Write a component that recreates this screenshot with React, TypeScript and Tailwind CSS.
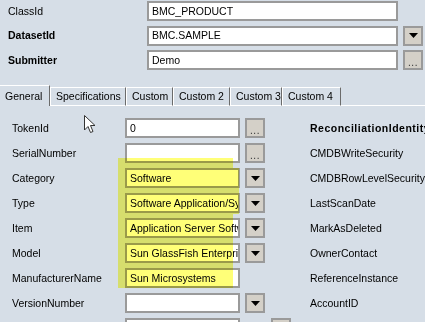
import React from "react";

const Arrow = () => (
  <svg width="9" height="5" viewBox="0 0 9 5">
    <path d="M0 0 H9 L4.5 5 Z" fill="#000" />
  </svg>
);

const Btn = ({ kind }: { kind: "dots" | "drop" }) => (
  <div className="w-[20px] h-[20px] shrink-0 bg-[#d4d0c8] border-2 border-[#9a9a9a] flex items-center justify-center">
    {kind === "drop" ? (
      <Arrow />
    ) : (
      <span className="text-[10px] leading-none text-[#333] mt-[5px] tracking-[0.5px]">...</span>
    )}
  </div>
);

const Input = ({ value, w }: { value: string; w: string }) => (
  <div
    className={`${w} h-[20px] shrink-0 bg-white border-2 border-[#9a9a9a] pl-[3px] flex items-center overflow-hidden whitespace-nowrap`}
  >
    {value}
  </div>
);

type Row = {
  label: string;
  value: string;
  btn?: "dots" | "drop";
  right: string;
  rightBold?: boolean;
};

const rows: Row[] = [
  { label: "TokenId", value: "0", btn: "dots", right: "ReconciliationIdentity", rightBold: true },
  { label: "SerialNumber", value: "", btn: "dots", right: "CMDBWriteSecurity" },
  { label: "Category", value: "Software", btn: "drop", right: "CMDBRowLevelSecurity" },
  { label: "Type", value: "Software Application/System", btn: "drop", right: "LastScanDate" },
  { label: "Item", value: "Application Server Software", btn: "drop", right: "MarkAsDeleted" },
  { label: "Model", value: "Sun GlassFish Enterprise Server", btn: "drop", right: "OwnerContact" },
  { label: "ManufacturerName", value: "Sun Microsystems", right: "ReferenceInstance" },
  { label: "VersionNumber", value: "", btn: "drop", right: "AccountID" },
];

const tabs = [
  { name: "General", w: "w-[50px]" },
  { name: "Specifications", w: "w-[76px]" },
  { name: "Custom", w: "w-[47px]" },
  { name: "Custom 2", w: "w-[57px]" },
  { name: "Custom 3", w: "w-[52px]" },
  { name: "Custom 4", w: "w-[59px]" },
];

export default function App() {
  return (
    <div className="relative w-[425px] h-[322px] overflow-hidden bg-[#d6dee7] text-black text-[10.5px] leading-none font-['Liberation_Sans',Arial,sans-serif]">
      {/* top section */}
      <div className="pt-px flex flex-col gap-[4.5px]">
        <div className="flex items-center h-[20px]">
          <div className="w-[147px] pl-[8px]">ClassId</div>
          <Input value="BMC_PRODUCT" w="w-[251px]" />
        </div>
        <div className="flex items-center h-[20px]">
          <div className="w-[147px] pl-[8px] font-bold">DatasetId</div>
          <Input value="BMC.SAMPLE" w="w-[251px]" />
          <div className="ml-[5px]">
            <Btn kind="drop" />
          </div>
        </div>
        <div className="flex items-center h-[20px]">
          <div className="w-[147px] pl-[8px] font-bold">Submitter</div>
          <Input value="Demo" w="w-[251px]" />
          <div className="ml-[5px]">
            <Btn kind="dots" />
          </div>
        </div>
      </div>

      {/* tab strip */}
      <div className="mt-[16px] h-[20px] flex items-end">
        {tabs.map((t, i) => (
          <div
            key={t.name}
            className={`${t.w} ${
              i === 0
                ? "h-[21px] border-t border-white"
                : "h-[19px] border-t border-l border-white border-b"
            } border-r border-r-[#6b6b6b] pl-[5px] flex items-center whitespace-nowrap shrink-0`}
          >
            {t.name}
          </div>
        ))}
        <div className="flex-1 h-px bg-white" />
      </div>

      {/* panel */}
      <div className="pt-[12px] flex flex-col gap-[5px]">
        {rows.map((r) => (
          <div key={r.label} className="flex items-center h-[20px] whitespace-nowrap">
            <div className="w-[125px] pl-[12px] shrink-0">{r.label}</div>
            <Input value={r.value} w="w-[115px]" />
            <div className="w-[20px] ml-[5px] shrink-0">{r.btn && <Btn kind={r.btn} />}</div>
            <div className={`ml-[45px] ${r.rightBold ? "font-bold tracking-[0.5px]" : ""}`}>{r.right}</div>
          </div>
        ))}
        <div className="flex items-center h-[20px]">
          <div className="w-[125px] shrink-0" />
          <Input value="" w="w-[115px]" />
          <div className="ml-[31px] w-[20px] h-[20px] bg-[#d4d0c8] border-2 border-[#9a9a9a]" />
        </div>
      </div>

      {/* highlighter marks */}
      <div className="absolute left-[118px] top-[158px] w-[115px] h-[130px] bg-[#ffff78] mix-blend-multiply pointer-events-none" />
      <div className="absolute left-[233px] top-[168px] w-[6px] h-[46px] bg-[#ffff78] mix-blend-multiply pointer-events-none" />

      {/* mouse cursor */}
      <svg
        className="absolute left-[84px] top-[115px] pointer-events-none"
        width="14"
        height="20"
        viewBox="0 0 14 20"
      >
        <path
          d="M0.5 0.5 L0.5 15 L4 11.5 L6.5 17.5 L9 16.5 L6.5 10.5 L11 10.5 Z"
          fill="#fff"
          stroke="#333"
          strokeWidth="1"
          strokeLinejoin="miter"
        />
      </svg>
    </div>
  );
}
